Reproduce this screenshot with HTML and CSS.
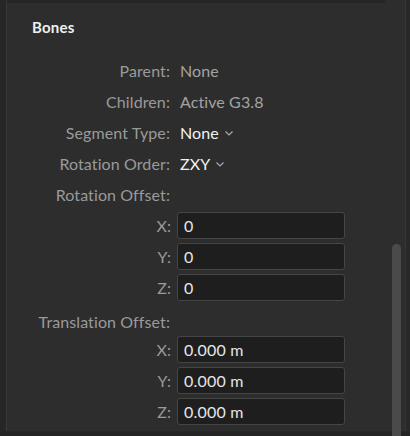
FILE: index.html
```html
<!DOCTYPE html>
<html>
<head>
<meta charset="utf-8">
<link rel="stylesheet" href="styles.css">
</head>
<body>
<div class="frame">
  <div class="edge"></div>
  <div class="panel">
    <div class="title">Bones</div>
    <div class="form">
      <div class="row"><span class="label">Parent:</span><span class="value muted">None</span></div>
      <div class="row"><span class="label">Children:</span><span class="value muted">Active G3.8</span></div>
      <div class="row"><span class="label">Segment Type:</span><span class="value bright">None<svg class="chev" viewBox="0 0 8 5" width="8" height="5"><polyline points="0.5,0.5 4,4 7.5,0.5"/></svg></span></div>
      <div class="row"><span class="label">Rotation Order:</span><span class="value bright">ZXY<svg class="chev" viewBox="0 0 8 5" width="8" height="5"><polyline points="0.5,0.5 4,4 7.5,0.5"/></svg></span></div>
      <div class="row section"><span class="label">Rotation Offset:</span></div>
      <div class="row field"><span class="label">X:</span><div class="input">0</div></div>
      <div class="row field"><span class="label">Y:</span><div class="input">0</div></div>
      <div class="row field"><span class="label">Z:</span><div class="input">0</div></div>
      <div class="row section trans"><span class="label">Translation Offset:</span></div>
      <div class="row field"><span class="label">X:</span><div class="input">0.000 m</div></div>
      <div class="row field"><span class="label">Y:</span><div class="input">0.000 m</div></div>
      <div class="row field"><span class="label">Z:</span><div class="input">0.000 m</div></div>
    </div>
  </div>
  <div class="scroll"><div class="thumb"></div></div>
  <div class="redge"></div>
</div>
</body>
</html>
```

FILE: styles.css
```css
html, body {
  margin: 0;
  padding: 0;
  background: #242424;
  width: 410px;
  height: 436px;
  overflow: hidden;
  font-family: Lato, "Open Sans", sans-serif;
}
.frame {
  display: flex;
  height: 431px;
  border-bottom: 1px solid #262626;
  background: #2d2d2d;
}
.edge {
  width: 6px;
  background: #262626;
  border-right: 1px solid #383838;
}
.panel {
  flex: 1;
  border-top: 3px solid #252525;
  padding-left: 25px;
}
.title {
  color: #f0f0f0;
  font-size: 15px;
  font-weight: 700;
  letter-spacing: 0.2px;
  height: 24px;
  line-height: 24px;
  margin-top: 12px;
}
.form {
  margin-top: 16px;
  display: flex;
  flex-direction: column;
}
.row {
  display: flex;
  align-items: center;
  height: 31px;
  font-size: 16px;
  letter-spacing: 0.1px;
  box-sizing: border-box;
}
.label {
  width: 138px;
  text-align: right;
  color: #9a9a9a;
  flex: none;
}
.value {
  margin-left: 10px;
  display: flex;
  align-items: center;
}
.muted { color: #a3a3a3; }
.bright { color: #f2f2f2; }
.chev {
  margin-left: 6px;
  margin-top: 2px;
  fill: none;
  stroke: #a8a8a8;
  stroke-width: 1.2;
}
.field .label { width: 139px; }
.input {
  margin-left: 6px;
  width: 160px;
  height: 25px;
  border: 1px solid #454545;
  border-radius: 3px;
  background: #1e1e1e;
  color: #e6e6e6;
  padding-left: 6px;
  line-height: 25px;
  font-size: 16px;
  letter-spacing: 0.2px;
}
.trans {
  padding-top: 5px;
}
.scroll {
  width: 20px;
  display: flex;
  justify-content: center;
  padding-top: 244px;
  padding-left: 2px;
  box-sizing: border-box;
}
.thumb {
  width: 9px;
  height: 200px;
  background: #4a4a4a;
  border-radius: 5px 5px 0 0;
}
.redge {
  width: 4px;
  background: #282828;
  border-left: 1px solid #363636;
}
```
